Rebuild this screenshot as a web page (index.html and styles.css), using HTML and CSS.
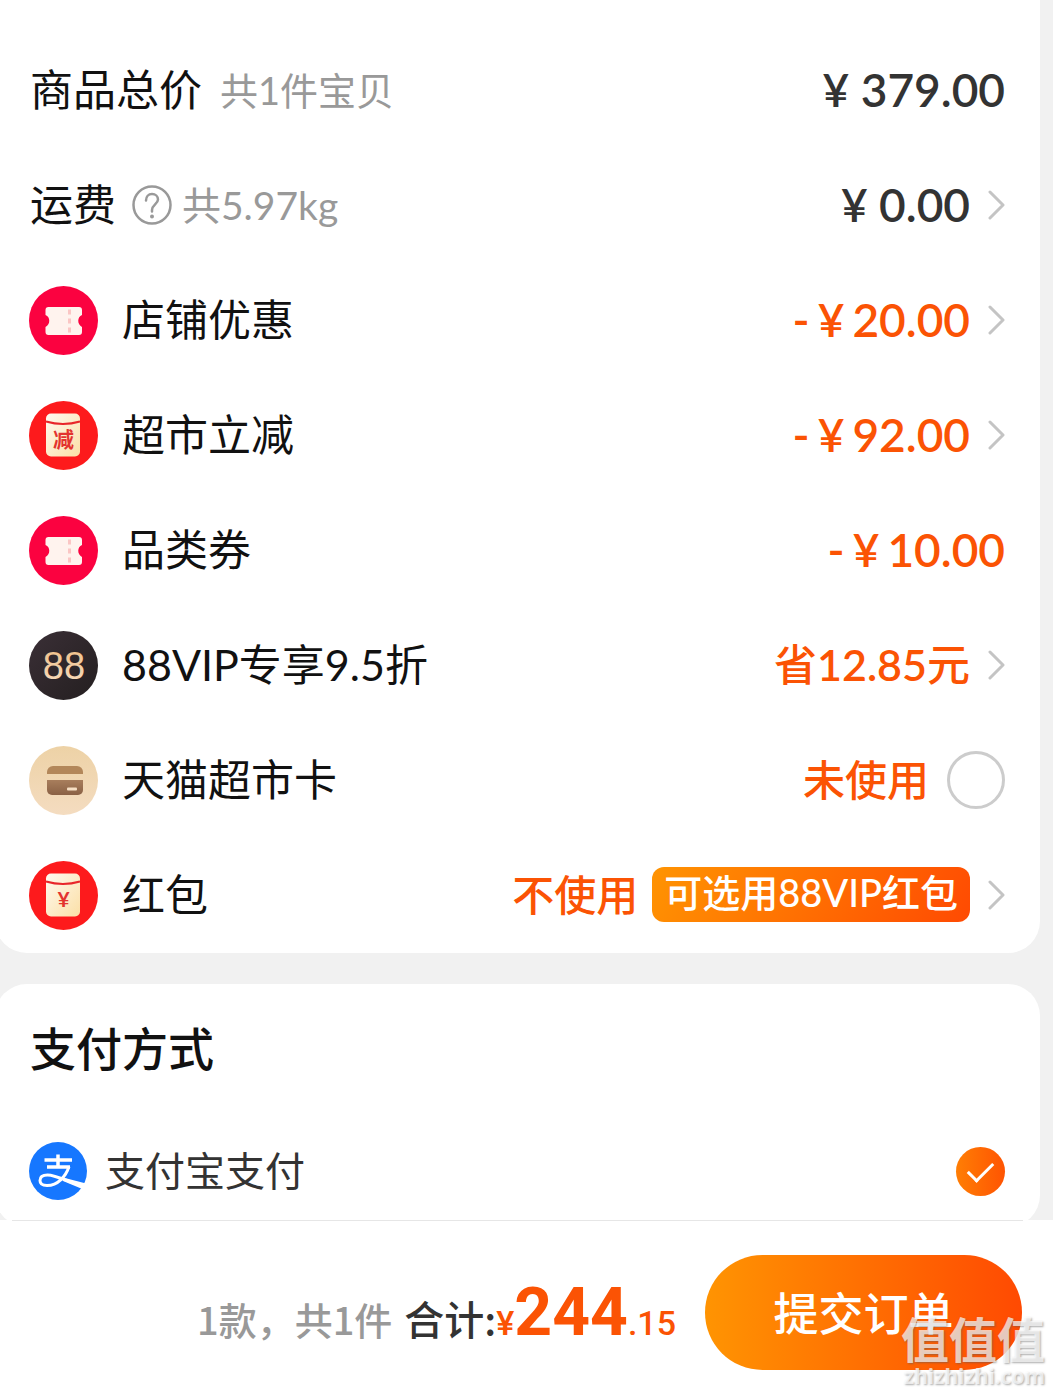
FILE: index.html
```html
<!DOCTYPE html>
<html lang="zh-CN">
<head>
<meta charset="utf-8">
<meta name="viewport" content="width=device-width, initial-scale=1">
<title>确认订单</title>
<link rel="stylesheet" href="styles.css">
</head>
<body>
<svg class="defs" width="0" height="0" aria-hidden="true">
  <defs>
    <linearGradient id="cream" x1="0" y1="0" x2="1" y2="1"><stop offset="0" stop-color="#fffaf0"/><stop offset="1" stop-color="#fbdfa6"/></linearGradient>
    <linearGradient id="gold" x1="0" y1="0" x2="0" y2="1"><stop offset="0" stop-color="#efbf86"/><stop offset="1" stop-color="#f7dcc0"/></linearGradient>
    <linearGradient id="sand" x1="0" y1="0" x2="0" y2="1"><stop offset="0" stop-color="#edd2a6"/><stop offset="1" stop-color="#f4dcc0"/></linearGradient>
    <linearGradient id="bronze" x1="0" y1="0" x2="0" y2="1"><stop offset="0" stop-color="#a87e5c"/><stop offset="1" stop-color="#8a6145"/></linearGradient>
    <linearGradient id="night" x1="0" y1="0" x2="1" y2="1"><stop offset="0" stop-color="#3a2f36"/><stop offset="1" stop-color="#241f20"/></linearGradient>
    <symbol id="chevron" viewBox="0 0 18 30"><path d="M3 2 16 15 3 28" fill="none" stroke="#c4c4c4" stroke-width="3" stroke-linecap="round" stroke-linejoin="round"/></symbol>
    <symbol id="ticket" viewBox="0 0 69 69">
      <circle cx="34.500" cy="34.500" r="34.500" fill="#fb0240"/>
      <path d="M19.500 21H50a3 3 0 0 1 3 3v5c-5 2-5 9.500 0 12v5a3 3 0 0 1-3 3H19.500a3 3 0 0 1-3-3v-5c5-2.500 5-10 0-12v-5a3 3 0 0 1 3-3z" fill="#fff3ee"/>
      <path d="M40.500 23.500v23" stroke="#fbc6c4" stroke-width="3" stroke-dasharray="5 4"/>
    </symbol>
    <symbol id="packet" viewBox="0 0 69 69">
      <circle cx="34.500" cy="34.500" r="34.500" fill="#fd1a1c"/>
      <rect x="17" y="12.500" width="34" height="43" rx="5" fill="url(#cream)"/>
      <path d="M17 20.500q17 5 34 0" fill="none" stroke="#e8262a" stroke-width="2"/>
    </symbol>
  </defs>
</svg>

<main class="page">
  <section class="card card-summary">
    <div class="row">
      <span class="label">商品总价</span>
      <span class="note">共1件宝贝</span>
      <span class="value price">¥ 379.00</span>
    </div>
    <div class="row">
      <span class="label">运费</span>
      <button class="help" aria-label="运费说明">
        <svg width="40" height="40" viewBox="0 0 40 40"><circle cx="20" cy="20" r="18.500" fill="none" stroke="#999" stroke-width="2.500"/><path d="M14 15.500C14 11.500 16.500 9 20 9s6 2.500 6 5.500c0 4.500-6 5.500-6 10.500v1.500" fill="none" stroke="#999" stroke-width="2.500" stroke-linecap="round"/><circle cx="20" cy="31.500" r="2" fill="#999"/></svg>
      </button>
      <span class="note note-weight">共5.97kg</span>
      <button class="value price">¥ 0.00<svg class="chevron"><use href="#chevron"/></svg></button>
    </div>
    <div class="row">
      <svg class="icon"><use href="#ticket"/></svg>
      <span class="label">店铺优惠</span>
      <button class="value price saving"><span class="minus">-</span><span class="yen">¥</span>20.00<svg class="chevron"><use href="#chevron"/></svg></button>
    </div>
    <div class="row">
      <svg class="icon" viewBox="0 0 69 69"><use href="#packet"/><text class="packet-word" x="34.500" y="46">减</text></svg>
      <span class="label">超市立减</span>
      <button class="value price saving"><span class="minus">-</span><span class="yen">¥</span>92.00<svg class="chevron"><use href="#chevron"/></svg></button>
    </div>
    <div class="row">
      <svg class="icon"><use href="#ticket"/></svg>
      <span class="label">品类券</span>
      <span class="value price saving"><span class="minus">-</span><span class="yen">¥</span>10.00</span>
    </div>
    <div class="row">
      <svg class="icon" viewBox="0 0 69 69"><circle cx="34.500" cy="34.500" r="34.500" fill="url(#night)"/><text class="vip-word" x="35" y="48">88</text></svg>
      <span class="label">88VIP专享9.5折</span>
      <button class="value saving">省<span class="amount">12.85</span>元<svg class="chevron"><use href="#chevron"/></svg></button>
    </div>
    <div class="row">
      <svg class="icon" viewBox="0 0 69 69"><circle cx="34.500" cy="34.500" r="34.500" fill="url(#sand)"/><path d="M18 28v-2a6 6 0 0 1 6-6h24a6 6 0 0 1 6 6v2z" fill="#b3875a"/><path d="M18 34h36v10a5 5 0 0 1-5 5H23a5 5 0 0 1-5-5z" fill="url(#bronze)"/><rect x="38" y="41.500" width="10" height="3" rx="1" fill="#f6dfc4"/></svg>
      <label class="label" for="market-card">天猫超市卡</label>
      <span class="value saving status">未使用<input class="check" type="checkbox" id="market-card"></span>
    </div>
    <div class="row">
      <svg class="icon" viewBox="0 0 69 69"><use href="#packet"/><text class="packet-word" x="34.500" y="46">¥</text></svg>
      <span class="label">红包</span>
      <button class="value saving status">不使用<span class="tag">可选用88VIP红包</span><svg class="chevron"><use href="#chevron"/></svg></button>
    </div>
  </section>

  <section class="card card-payment">
    <h2 class="title">支付方式</h2>
    <label class="method">
      <svg class="alipay" width="58" height="58" viewBox="0 0 58 58"><circle cx="29" cy="29" r="29" fill="#1677ff"/><path d="M15.500 18H43M29 12.500V25M18 25H41" fill="none" stroke="#fff" stroke-width="3.500"/><path d="M40 24.500C37 34 29 43.500 18 43.500c-4.500 0-7-2-7-5 0-3.500 3-5.500 7.500-5.500 8 0 18 5.500 34 11" fill="none" stroke="#fff" stroke-width="3"/><path d="M34 35.500 57 41.500a29 29 0 0 1-2.500 6L34 39z" fill="#fff"/></svg>
      <span class="method-name">支付宝支付</span>
      <input class="radio" type="radio" name="method" checked>
    </label>
  </section>
</main>

<footer class="bar">
  <hr class="rule">
  <div class="bar-content">
    <p class="total"><span class="count">1款，共1件</span><span class="sum">合计:</span><span class="small">¥</span><span class="big">244</span><span class="small">.15</span></p>
    <button class="submit">提交订单</button>
  </div>
  <div class="watermark"><span class="mark-name">值值值</span><span class="mark-site">zhizhizhi.com</span></div>
</footer>
</body>
</html>
```
FILE: styles.css
```css
* { box-sizing: border-box; }

body {
  margin: 0;
  background: #f1f1f1;
  color: #111;
  font-family: Lato, "Noto Sans CJK SC", sans-serif;
  font-size: 43px;
  line-height: 58px;
  overflow-x: hidden;
}

button {
  padding: 0;
  border: 0;
  background: none;
  color: inherit;
  font: inherit;
}

.defs { position: absolute; }

.page {
  display: flex;
  flex-direction: column;
  gap: 31px;
}

.card {
  margin: 0 13px 0 -5px;
  padding: 0 35px;
  border-radius: 32px;
  background: #fff;
}

.card-summary {
  padding-top: 33px;
  border-radius: 0 0 32px 32px;
}

.row {
  display: flex;
  align-items: center;
  height: 115px;
  white-space: nowrap;
}

.icon {
  width: 69px;
  height: 69px;
  margin: 0 24px 0 -1px;
}

.packet-word {
  fill: #e3342f;
  font-size: 21px;
  font-weight: 700;
  text-anchor: middle;
}

.vip-word {
  fill: url(#gold);
  font-size: 38px;
  font-family: "Liberation Sans", sans-serif;
  text-anchor: middle;
}

.label,
.note,
.help,
.value {
  padding-bottom: 2px;
}

.note {
  margin-left: 18px;
  color: #999;
  font-size: 38px;
}

.help {
  display: flex;
  margin-left: 16px;
}

.note-weight {
  margin-left: 10px;
  font-size: 39px;
}

.value {
  display: flex;
  align-items: center;
  margin-left: auto;
  font-weight: 500;
}

.price {
  color: #333;
  font-size: 46px;
  font-weight: 600;
}

.saving { color: #fb5304; }

.amount { font-weight: 600; }

.status { font-size: 42px; }

.minus { margin-right: 8px; }

.yen { margin-right: 8px; }

.chevron {
  width: 18px;
  height: 30px;
  margin-left: 17px;
}

.check {
  appearance: none;
  width: 58px;
  height: 58px;
  margin: 0 0 0 18px;
  border: 3px solid #ccc;
  border-radius: 50%;
}

.tag {
  height: 55px;
  margin-left: 14px;
  padding: 0 12px;
  border-radius: 12px;
  background: linear-gradient(120deg, #ff9402, #ff4a02);
  color: #fff;
  font-size: 38px;
  line-height: 50px;
}

.card-payment { padding: 36px 35px 27px; }

.title {
  margin: 0;
  font-size: 46px;
  font-weight: 500;
  line-height: 58px;
}

.method {
  display: flex;
  align-items: center;
  margin-top: 64px;
}

.alipay { margin-left: -1px; }

.method-name {
  margin-left: 18px;
  color: #333;
  font-size: 40px;
}

.radio {
  appearance: none;
  display: grid;
  place-items: center;
  width: 49px;
  height: 49px;
  margin: 0 0 0 auto;
  border-radius: 50%;
  background: linear-gradient(90deg, #ff7e04, #ff5402);
}

.radio::before {
  content: "";
  width: 22px;
  height: 11px;
  margin-bottom: 4px;
  border: solid #fff;
  border-width: 0 0 3px 3px;
  transform: rotate(-45deg);
}

.bar {
  position: relative;
  margin-top: -7px;
  background: #fff;
  font-family: "Noto Sans CJK SC", sans-serif;
  font-weight: 500;
}

.rule {
  height: 1px;
  margin: 0 30px 0 12px;
  border: 0;
  background: #e6e6e6;
}

.bar-content {
  display: flex;
  align-items: center;
  justify-content: flex-end;
  gap: 29px;
  padding: 34px 31px 26px;
}

.total {
  margin: 0;
  padding-top: 10px;
  color: #fb5304;
  white-space: nowrap;
}

.count {
  margin-right: 12px;
  color: #999;
  font-size: 38px;
}

.sum {
  color: #333;
  font-size: 40px;
}

.small {
  font-family: Roboto, sans-serif;
  font-size: 34px;
}

.big {
  font-family: Roboto, sans-serif;
  font-size: 66px;
  font-weight: 700;
}

.submit {
  width: 317px;
  height: 115px;
  padding-bottom: 2px;
  border-radius: 58px;
  background: linear-gradient(90deg, #ff9402, #ff4a02);
  color: #fff;
  font-size: 45px;
}

.watermark {
  position: absolute;
  right: 8px;
  bottom: 4px;
  display: flex;
  flex-direction: column;
  align-items: flex-end;
  color: rgba(255, 255, 255, 0.7);
  font-weight: 700;
  text-shadow: 1px 1px 2px rgba(90, 90, 90, 0.5);
  pointer-events: none;
}

.mark-name {
  font-size: 48px;
  line-height: 46px;
}

.mark-site {
  font-family: "Noto Sans", sans-serif;
  font-size: 21px;
  line-height: 32px;
}
```
